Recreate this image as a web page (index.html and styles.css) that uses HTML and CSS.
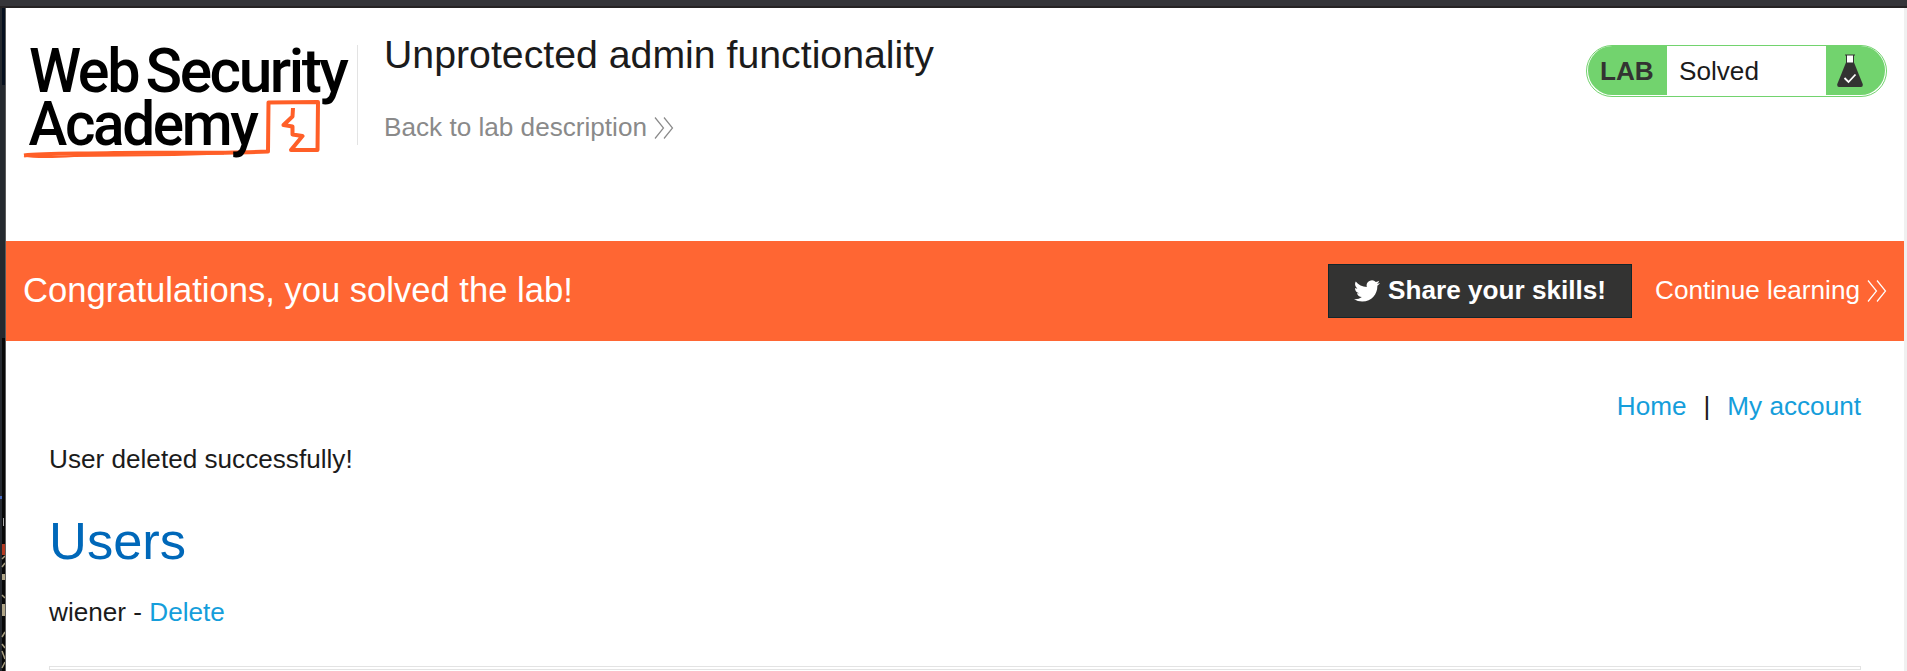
FILE: index.html
```
<!DOCTYPE html>
<html lang="en">
<head>
<meta charset="utf-8">
<title>Unprotected admin functionality</title>
<link rel="stylesheet" href="styles.css">
</head>
<body>
<div class="topbar"></div>
<div class="window">
  <svg class="edge" viewBox="0 0 6 663" width="6" height="663">
    <rect width="6" height="663" fill="#25292f"/>
    <rect x="2" width="3" height="77" fill="#06101f"/>
    <rect x="2" y="330" width="3" height="333" fill="#080808"/>
    <rect y="488" width="2" height="3" fill="#4668bd"/>
    <rect x="3" y="510" width="1" height="8" fill="#aaa"/>
    <rect x="2" y="536" width="3" height="11" fill="#b33a22"/>
    <path d="M2 551l3-3M2 559l3-4M2 587l3 3M2 629l3-5M2 636l3 4M2 643l3 8M2 660l3-6" stroke="#a99f80" stroke-width="1.5"/>
    <rect x="2" y="566" width="3" height="6" fill="#b0a587"/>
    <rect x="2" y="596" width="3" height="12" fill="#b0a587"/>
    <rect x="5" width="1" height="663" fill="#5b5b5b"/>
  </svg>
  <main class="page">
    <header class="header">
      <svg class="logo" viewBox="0 0 332 120" width="332" height="120">
        <path d="M0 115.500C20 113 55 114 90 113S190 114 244 111.500L244.500 62.500 294 62 293.500 110 267 110 278.500 96 268.500 94.500 268.500 86.500 259.500 85 268.500 76.500 269 68" class="logo-line"/>
        <path d="M0 115.500C12 118 28 117.500 50 116L150 115 200 113.500" class="logo-thin"/>
        <g class="logo-text">
          <text x="5" y="51.500" textLength="109" lengthAdjust="spacingAndGlyphs">Web</text>
          <text x="121.500" y="51.500" textLength="201" lengthAdjust="spacingAndGlyphs">Security</text>
          <text x="4.500" y="104.500" textLength="228" lengthAdjust="spacingAndGlyphs">Academy</text>
        </g>
      </svg>
      <div class="title-block">
        <h2 class="title">Unprotected admin functionality</h2>
        <a class="back">Back to lab description<svg class="chevrons" viewBox="0 0 20 22" width="20" height="22"><path d="M1 .5L9.500 11 1 21.500M10 .5L18.500 11 10 21.500"/></svg></a>
      </div>
      <div class="badge">
        <span class="badge-lab">LAB</span>
        <span class="badge-state">Solved</span>
        <span class="badge-icon">
          <svg viewBox="0 0 26 34" width="26" height="34">
            <path d="M9 1h8v9h-8z" fill="#fff"/>
            <path d="M8 1h10M9.500 1v8M16.500 1v8" stroke="#333332" fill="none"/>
            <path d="M9 8.500h8L25.700 30q.6 3-1.700 3H2Q-.3 33 .3 30z" fill="#333332"/>
            <path d="M7.500 24l4 4L18.500 20.500" fill="none" stroke="#fff" stroke-width="1.800"/>
          </svg>
        </span>
      </div>
    </header>
    <section class="banner">
      <h4 class="congrats">Congratulations, you solved the lab!</h4>
      <a class="share"><svg class="bird" viewBox="0 0 24 24" width="26" height="26"><path fill="#fff" d="M23.950 4.570a10 10 0 0 1-2.820.775 4.960 4.960 0 0 0 2.160-2.723c-.95.555-2.005.959-3.127 1.184a4.920 4.920 0 0 0-8.384 4.482C7.690 8.095 4.067 6.130 1.640 3.162a4.920 4.920 0 0 0-.666 2.475c0 1.710.87 3.213 2.188 4.096a4.900 4.900 0 0 1-2.228-.616v.06a4.920 4.920 0 0 0 3.946 4.827 5 5 0 0 1-2.212.085 4.940 4.940 0 0 0 4.604 3.417 9.870 9.870 0 0 1-6.102 2.105c-.39 0-.779-.023-1.170-.067a14 14 0 0 0 7.557 2.209c9.053 0 13.998-7.496 13.998-13.985 0-.21 0-.42-.015-.63A9.940 9.940 0 0 0 24 4.590z"/></svg><span>Share your skills!</span></a>
      <a class="continue">Continue learning<svg class="chevrons" viewBox="0 0 20 22" width="20" height="22"><path d="M1 .5L9.500 11 1 21.500M10 .5L18.500 11 10 21.500"/></svg></a>
    </section>
    <section class="content">
      <nav class="nav"><a>Home</a><span>|</span><a>My account</a></nav>
      <p class="message">User deleted successfully!</p>
      <h1 class="users">Users</h1>
      <div class="user">wiener - <a>Delete</a></div>
      <hr class="rule">
    </section>
  </main>
</div>
</body>
</html>
```
FILE: styles.css
```
* { box-sizing: border-box; }
body {
  margin: 0;
  height: 671px;
  overflow: hidden;
  background: #fff;
  color: #1b1b1b;
  font: 26.15px/30px Arial, "Liberation Sans", sans-serif;
}
h1, h2, h4, p { margin: 0; font-weight: 400; }
.topbar { height: 8px; background: #353539; border-bottom: 2px solid #262324; }
.window { display: flex; height: 663px; border-right: 3px solid #f0f0f0; }
.edge { flex: none; display: block; }
.page { flex: 1; min-width: 0; }

.header { display: flex; align-items: flex-start; height: 233px; padding: 32px 17px 0 18px; }
.logo { flex: none; overflow: visible; }
.logo-text {
  font: 500 61.5px Roboto, sans-serif;
  letter-spacing: -2.5px;
  fill: #000;
}
.logo-line { fill: none; stroke: #ff5f28; stroke-width: 4; stroke-linejoin: round; }
.logo-thin { fill: none; stroke: #ff5f28; stroke-width: 2; }
.title-block {
  display: flex;
  flex-direction: column;
  height: 100px;
  margin: 5px 0 0 1px;
  padding-left: 26px;
  border-left: 1px solid #e3e3e3;
}
.title { margin-top: -13px; font-size: 39.25px; line-height: 44px; }
.back { margin-top: 36px; color: #8a8a8a; white-space: nowrap; }
.chevrons { margin-left: 7px; vertical-align: -3px; fill: none; stroke: currentColor; stroke-width: 1.2; }

.badge {
  display: flex;
  width: 301px;
  height: 52px;
  margin: 5px 0 0 auto;
  padding: 0 1px 1px;
  border: 1px solid #72d36e;
  border-radius: 26px;
  line-height: 50px;
}
.badge-lab {
  width: 79px;
  padding-left: 12px;
  border-radius: 25px 0 0 25px;
  background: #72d36e;
  color: #333332;
  font-weight: 700;
}
.badge-state { flex: 1; padding-left: 12px; }
.badge-icon {
  width: 59px;
  padding: 8px 0 0 11px;
  border-radius: 0 25px 25px 0;
  background: #72d36e;
  line-height: 0;
}

.banner {
  display: flex;
  align-items: center;
  height: 100px;
  padding: 0 17px 0 17px;
  background: #ff6633;
  color: #fff;
}
.congrats { margin-right: auto; padding-bottom: 2px; font-size: 34.6px; line-height: 40px; }
.continue { padding-bottom: 2px; }
.share {
  display: flex;
  align-items: center;
  justify-content: center;
  width: 304px;
  height: 54px;
  margin-right: 23px;
  background: #333332;
  border: 1px solid #12262c;
  font-weight: 700;
}
.share span { padding-bottom: 2px; }
.bird { margin-right: 8px; }

.content { padding: 50px 43px 0; }
.nav { display: flex; justify-content: flex-end; gap: 17px; }
.nav a, .user a { color: #159edb; }
.message { margin-top: 23px; }
.users { margin-top: 37px; color: #0068b9; font-size: 52.5px; line-height: 60px; }
.user { margin-top: 26px; }
.rule { height: 4px; margin: 39px 0 0; border: 1px solid #e3e3e3; }
```
